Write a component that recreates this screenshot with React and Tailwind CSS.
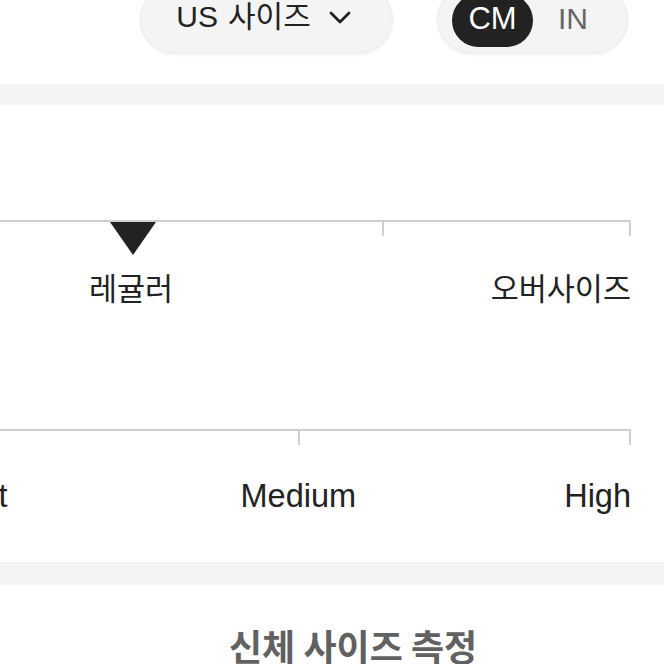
const latin = { fontFamily: '"Liberation Sans", "Noto Sans CJK KR", sans-serif' };
const hangul = { fontFamily: '"Noto Sans CJK KR", "Liberation Sans", sans-serif' };

const Tick = ({ left }) => (
    <div className="absolute top-0 w-[2px] h-[16px] bg-[#cfcfcf]" style={{ left }} />
);

const Chevron = () => (
    <svg width="22" height="14" viewBox="0 0 22 14" fill="none" stroke="#222" strokeWidth="2.8" strokeLinecap="round" strokeLinejoin="round">
        <polyline points="2,2 11,11 20,2" />
    </svg>
);

const App = () => {
    return (
        <div className="w-[664px] h-[664px] overflow-hidden bg-white text-[#222]">
            {/* top controls */}
            <div className="h-[84px] flex items-start">
                <button className="ml-[140px] -mt-[15px] w-[253px] h-[68px] rounded-full bg-[#f4f4f4] border border-[#ececec] shadow-[0_2px_3px_rgba(0,0,0,0.06)] flex items-end justify-center pb-[20px] gap-[18px]">
                    <span className="flex items-baseline gap-[10px] leading-none -ml-[6px]">
                        <span className="text-[30px]" style={latin}>US</span>
                        <span className="text-[30px]" style={hangul}>사이즈</span>
                    </span>
                    <span className="mb-[7px]"><Chevron /></span>
                </button>
                <div className="ml-[44px] -mt-[15px] w-[191px] h-[68px] rounded-full bg-[#f4f4f4] border border-[#ececec] shadow-[0_2px_3px_rgba(0,0,0,0.06)] flex items-stretch pl-[14px] pb-[5px] pt-[8px]">
                    <div className="w-[81px] rounded-full bg-[#222] text-white flex items-end justify-center pb-[13px] text-[31px] leading-none" style={latin}>CM</div>
                    <div className="flex-1 flex items-end justify-center pb-[13px] pr-[14px] text-[30px] leading-none text-[#666]" style={latin}>IN</div>
                </div>
            </div>

            <div className="h-[21px] bg-[#f4f4f4]" />

            {/* fit scales */}
            <div className="h-[457px] pt-[115px] flex flex-col">
                <div className="relative ml-[-63px] w-[694px] h-[47px]">
                    <div className="h-[2px] bg-[#cfcfcf]" />
                    <Tick left={445} />
                    <Tick left={692} />
                    <div className="absolute left-[173px] top-[2px] w-0 h-0 border-l-[23px] border-r-[23px] border-t-[33px] border-l-transparent border-r-transparent border-t-[#222]" />
                </div>
                <div className="flex pr-[33px] text-[30.5px] leading-[40px]" style={hangul}>
                    <span className="ml-[89px]">레귤러</span>
                    <span className="ml-auto">오버사이즈</span>
                </div>

                <div className="relative ml-[-63px] w-[694px] h-[51px] mt-[122px]">
                    <div className="h-[2px] bg-[#cfcfcf]" />
                    <Tick left={361} />
                    <Tick left={692} />
                </div>
                <div className="flex ml-[-63px] w-[694px] text-[32.5px] leading-[32px]" style={latin}>
                    <span>Light</span>
                    <span className="ml-[233px]">Medium</span>
                    <span className="ml-auto">High</span>
                </div>
            </div>

            <div className="h-[23px] bg-[#f4f4f4]" />

            <div className="pt-[38px] pl-[229px] text-[36px] font-bold text-[#616161] leading-[44px] whitespace-nowrap" style={hangul}>
                신체 사이즈 측정
            </div>
        </div>
    );
};

export default App;
